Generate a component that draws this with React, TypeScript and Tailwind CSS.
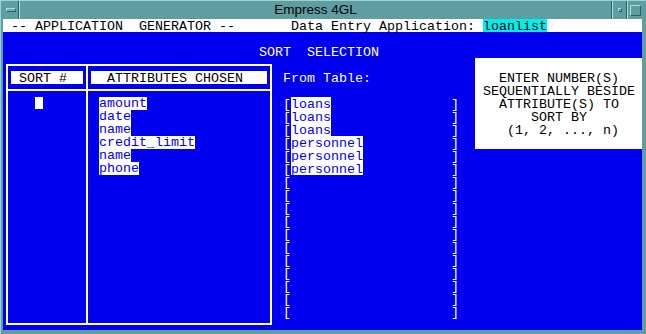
import React from 'react';

const tables = [
  'loans', 'loans', 'loans', 'personnel', 'personnel', 'personnel',
  '', '', '', '', '', '', '', '', '', '', '',
];

const attributes = ['amount', 'date', 'name', 'credit_limit', 'name', 'phone'];

const help = ['ENTER NUMBER(S)', 'SEQUENTIALLY BESIDE', 'ATTRIBUTE(S) TO', 'SORT BY', ' (1, 2, ..., n)'];

function TitleBar() {
  return (
    <div className="h-[19px] flex pl-[3px] pr-[4px] border-t border-[#9bd3d4] text-black">
      {/* window menu button */}
      <div className="w-[15px] flex items-center justify-center border-r border-[#2f5f60]">
        <div className="w-[10px] h-[4px] bg-[#6fb0b2] border-t border-l border-[#a8e0e0] border-b-[#2f5f60] border-r-[#2f5f60] border-b border-r" />
      </div>
      <div className="flex-1 flex items-center justify-center border-l border-r border-l-[#a8e0e0] border-r-[#2f5f60] font-['Liberation_Sans',sans-serif] text-[13.5px] leading-none pb-[1px]">
        Empress 4GL
      </div>
      {/* minimize */}
      <div className="w-[15px] flex items-center justify-center border-l border-r border-l-[#a8e0e0] border-r-[#2f5f60]">
        <div className="w-[4px] h-[4px] border-t border-l border-[#a8e0e0] border-b border-r border-b-[#2f5f60] border-r-[#2f5f60] ml-[1px]" />
      </div>
      {/* maximize */}
      <div className="w-[15px] flex items-center justify-center border-l border-[#a8e0e0]">
        <div className="w-[11px] h-[11px] border-t border-l border-[#a8e0e0] border-b border-r border-b-[#2f5f60] border-r-[#2f5f60]" />
      </div>
    </div>
  );
}

export default function App() {
  return (
    <div className="w-[646px] h-[334px] bg-[#5f9ea0] flex flex-col overflow-hidden border-l border-[#9bd3d4]">
      <TitleBar />
      <div className="ml-[2px] w-[639px] h-[311px] bg-[#0000ee] overflow-hidden">
        <div className="grid grid-cols-[repeat(80,8px)] grid-rows-[repeat(24,13px)] text-white font-['Liberation_Mono',monospace] text-[13.33px] leading-[15px] whitespace-pre">
          {/* header line */}
          <div className="row-start-1 col-start-1 col-span-full h-[13px] flex bg-white text-black">
            <span>{' -- APPLICATION  GENERATOR --       Data Entry Application: '}</span>
            <span className="h-[13px] bg-[#00eeee]">loanlist</span>
          </div>

          <div className="row-start-3 col-start-[33] col-span-[15]">SORT  SELECTION</div>

          {/* left panel frame */}
          <div className="row-start-4 row-end-[25] col-start-1 col-end-[35] mx-[3px] my-[6px] border-2 border-white flex">
            <div className="w-[80px] border-r-2 border-white flex flex-col">
              <div className="h-[25px] border-b-2 border-white" />
            </div>
            <div className="flex-1 flex flex-col">
              <div className="h-[25px] border-b-2 border-white" />
            </div>
          </div>

          <div className="row-start-5 col-start-2 col-span-9 h-[13px] bg-white text-black">{' SORT #'}</div>
          <div className="row-start-5 col-start-[12] col-span-[22] h-[13px] bg-white text-black">{'  ATTRIBUTES CHOSEN'}</div>

          {/* cursor */}
          <div className="row-start-7 col-start-5 h-[12px] bg-white" />

          <div className="row-start-7 row-span-6 col-start-[13] col-span-[20] flex flex-col items-start leading-[13px]">
            {attributes.map((a, i) => (
              <span key={i} className="h-[13px] bg-white text-[#0000ee]">{a}</span>
            ))}
          </div>

          <div className="row-start-5 col-start-[36] col-span-[12] h-[13px]">From Table:</div>

          <div className="row-start-7 row-end-[24] col-start-[36] col-end-[58] flex flex-col">
            {tables.map((t, i) => (
              <div key={i} className="h-[13px] flex justify-between">
                <div className="flex">
                  <span className="h-[13px]">[</span>
                  {t && <span className="h-[13px] bg-white text-[#0000ee]">{t}</span>}
                </div>
                <span className="h-[13px]">]</span>
              </div>
            ))}
          </div>

          {/* help box */}
          <div className="row-start-4 row-end-[11] col-start-[60] col-end-[81] bg-white text-black pt-[13px] flex flex-col">
            {help.map((h) => (
              <div key={h} className="h-[13px] text-center">{h}</div>
            ))}
          </div>
        </div>
      </div>
    </div>
  );
}
